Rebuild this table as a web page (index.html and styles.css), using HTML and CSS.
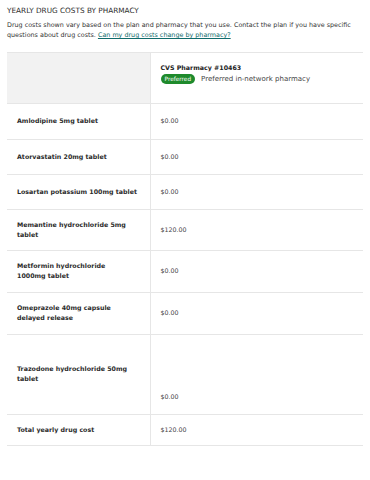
FILE: index.html
```html
<!DOCTYPE html>
<html lang="en">
<head>
<meta charset="utf-8">
<link rel="stylesheet" href="styles.css">
</head>
<body>
<div class="page">
  <h2 class="title">YEARLY DRUG COSTS BY PHARMACY</h2>
  <p class="intro">Drug costs shown vary based on the plan and pharmacy that you use. Contact the plan if you have specific questions about drug costs. <a href="#" class="link">Can my drug costs change by pharmacy?</a></p>
  <table class="costs">
    <tr class="head">
      <th class="blank"></th>
      <th class="pharm">
        <div class="pname">CVS Pharmacy #10463</div>
        <div class="pline"><span class="badge">Preferred</span><span class="pdesc">Preferred in-network pharmacy</span></div>
      </th>
    </tr>
    <tr class="h36"><td class="drug">Amlodipine 5mg tablet</td><td class="val">$0.00</td></tr>
    <tr class="h35"><td class="drug">Atorvastatin 20mg tablet</td><td class="val">$0.00</td></tr>
    <tr class="h35"><td class="drug">Losartan potassium 100mg tablet</td><td class="val">$0.00</td></tr>
    <tr class="h41"><td class="drug">Memantine hydrochloride 5mg tablet</td><td class="val">$120.00</td></tr>
    <tr class="h42"><td class="drug">Metformin hydrochloride<br>1000mg tablet</td><td class="val">$0.00</td></tr>
    <tr class="h42"><td class="drug">Omeprazole 40mg capsule delayed release</td><td class="val">$0.00</td></tr>
    <tr class="h80"><td class="drug">Trazodone hydrochloride 50mg tablet</td><td class="val bottom">$0.00</td></tr>
    <tr class="h31"><td class="drug">Total yearly drug cost</td><td class="val">$120.00</td></tr>
  </table>
</div>
</body>
</html>
```

FILE: styles.css
```css
* { box-sizing: border-box; }
html, body { margin: 0; padding: 0; background: #fff; }
body { font-family: "DejaVu Sans", "Open Sans", sans-serif; color: #333; }
.page { padding: 5px 7px 7px 7px; }
.title { margin: 0; font-size: 7.3px; font-weight: 400; line-height: 11px; color: #2e2e2e; }
.intro { margin: 4px 0 0 0; font-size: 6.4px; line-height: 10.3px; color: #333; }
.link { color: #106b6b; text-decoration: underline; }
.costs { margin-top: 11px; width: 356px; border-collapse: collapse; table-layout: fixed; }
.costs th, .costs td { padding: 0 10px; border-top: 1px solid #e6e6e6; border-bottom: 1px solid #e6e6e6; text-align: left; }
.costs th:first-child, .costs td:first-child { width: 143px; border-right: 1px solid #e6e6e6; }
.head { height: 51px; }
.blank { background: #f2f2f2; }
.pharm { vertical-align: top; padding-top: 10px !important; font-weight: normal; }
.pname { font-size: 6.3px; font-weight: 700; line-height: 10px; color: #222; }
.pline { display: flex; align-items: center; gap: 6px; margin-top: 1px; }
.badge { background: #1e8a2c; color: #fff; font-size: 5.8px; line-height: 10px; padding: 0 4px; border-radius: 6px; }
.pdesc { font-size: 7px; color: #444; }
.drug { font-size: 6.3px; font-weight: 700; line-height: 10px; color: #2b2b2b; vertical-align: middle; }
.val { font-size: 6.3px; line-height: 10px; color: #444; vertical-align: middle; }
.val.bottom { vertical-align: bottom; padding-bottom: 12px; }
.h31 { height: 31px; }
.h35 { height: 35px; }
.h36 { height: 36px; }
.h41 { height: 41px; }
.h42 { height: 42px; }
.h80 { height: 80px; }
```
